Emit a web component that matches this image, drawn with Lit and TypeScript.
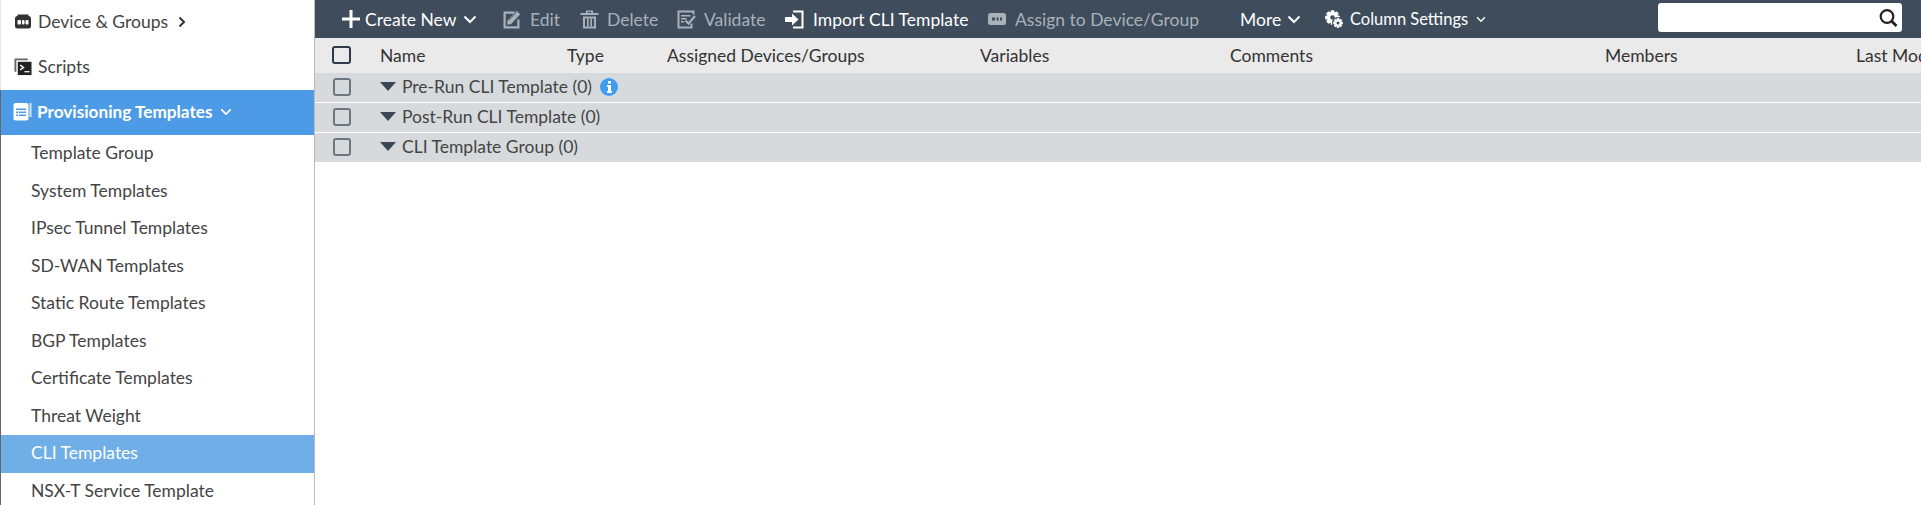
import { LitElement, html, css, svg } from "lit";
import { customElement } from "lit/decorators.js";

const chev = (c: string, w = 14, h = 9, sw = 2) => html`<svg class="chev" width=${w} height=${h} viewBox="0 0 14 9"><path d="M1.500 1.500 7 7l5.500-5.500" fill="none" stroke=${c} stroke-width=${sw}/></svg>`;

/* Gear outline computed from tooth count and radii */
const cog = (cx: number, cy: number, R: number, r: number, n: number) => {
  const pts: string[] = [];
  for (let i = 0; i < n; i++) {
    const a = (i / n) * Math.PI * 2;
    const s = (Math.PI * 2) / n;
    for (const [rad, off] of [[r, -0.5], [R, -0.28], [R, 0.28], [r, 0.5]] as [number, number][]) {
      const t = a + off * s;
      pts.push(`${(cx + rad * Math.cos(t)).toFixed(2)},${(cy + rad * Math.sin(t)).toFixed(2)}`);
    }
  }
  return pts.join(" ");
};

const OFF = "#a9b1b9";
const BAR = "#3e4c5c";

const side = {
  device: svg`<path d="M3.500 1.500h11v1.500h-11z" fill="#333"/><rect x="1" y="3" width="16" height="12.500" rx="2.500" fill="#333"/><rect x="3.500" y="7" width="3.500" height="4.500" rx="1" fill="#fff"/><rect x="8" y="7" width="2.500" height="4.500" rx="1" fill="#fff"/><rect x="11.500" y="7" width="3" height="4.500" rx="1" fill="#fff"/>`,
  scripts: svg`<path d="M0.500 0.500h14v2H2.500v12h-2z" fill="#666"/><rect x="4" y="4" width="14.500" height="14" fill="#222"/><path d="M6.500 7.500l3.500 2.500-3.500 2.500" fill="none" stroke="#fff" stroke-width="1.500"/><path d="M11 14.500h5.500" stroke="#fff" stroke-width="1.300"/>`,
  prov: svg`<path d="M16.500 1h2v14h-2z" fill="#fff" opacity=".75"/><rect x="0.500" y="1" width="15" height="17.500" rx="2" fill="#fff"/><path d="M3 6.500h10V8H3zM6 9.500h7V11H6zM6 12.500h7V14H6zM3 9.500h2V11H3zM3 12.500h2V14H3z" fill="#4d9be6"/>`,
};

const tb = {
  plus: svg`<path d="M7.500 0h3v7.500H18v3h-7.500V18h-3v-7.500H0v-3h7.500z" fill="#fff"/>`,
  edit: svg`<path d="M1.500 1.500h11v2.200H3.700v12.600h11.600V9.500h2.200v9h-16z" fill="${OFF}"/><path d="M5.500 10.500 14.500.8l3.700 3.500-9 9.700-4 .8z" fill="${OFF}"/><path d="M6.800 10.300l8-8.500" stroke="${BAR}" stroke-width=".8"/>`,
  del: svg`<path d="M6 .5h7v2.500h5.500v2H.5V3H6zm1.800 1.300v1.200h3.400V1.800z" fill="${OFF}" fill-rule="evenodd"/><path d="M3 6.500h13v12H3zm2 2v8h9v-8z" fill="${OFF}" fill-rule="evenodd"/><path d="M7 8.500h1.700v8H7zM10.300 8.500H12v8h-1.700z" fill="${OFF}"/>`,
  val: svg`<path d="M.5.500h17v4h-2V2.500H2.500v14h11v-3h2v5H.5z" fill="${OFF}"/><path d="M4 5h9.500v1.500H4zM4 8h5.500v1.500H4zM4 11h3v1.500H4z" fill="${OFF}"/><path d="M8.500 10.500l3 3.200 6.500-7.700" fill="none" stroke="${OFF}" stroke-width="2.200"/>`,
  imp: svg`<path d="M8 .5h10.500v18H8v-2h8.500V2.500H8z" fill="#fff"/><path d="M0 7h7V3.500l6.500 6-6.500 6V12H0z" fill="#fff"/>`,
  assign: svg`<rect x="0" y="3" width="18" height="12" rx="2.500" fill="${OFF}"/><rect x="4" y="7.500" width="3" height="3" fill="${BAR}"/><rect x="8.500" y="7.500" width="2" height="3" fill="${BAR}"/><rect x="12" y="7.500" width="2" height="3" fill="${BAR}"/>`,
  gear: svg`<polygon points="${cog(7.500, 7.500, 7.500, 5.500, 8)}" fill="#fff"/><circle cx="7.500" cy="7.500" r="2.200" fill="${BAR}"/><circle cx="13" cy="13" r="6" fill="${BAR}"/><polygon points="${cog(13, 13, 5, 3.600, 8)}" fill="#fff"/><circle cx="13" cy="13" r="1.500" fill="${BAR}"/>`,
};

interface Btn { w: number; icon: unknown; iw: number; gap: number; label: string; off?: boolean; small?: boolean; chev?: unknown; cgap?: number; }

const buttons: Btn[] = [
  { w: 160, icon: tb.plus, iw: 18, gap: 5, label: "Create New", chev: chev("#fff"), cgap: 7 },
  { w: 78, icon: tb.edit, iw: 19, gap: 9, label: "Edit", off: true },
  { w: 97, icon: tb.del, iw: 19, gap: 8, label: "Delete", off: true },
  { w: 108, icon: tb.val, iw: 19, gap: 8, label: "Validate", off: true },
  { w: 203, icon: tb.imp, iw: 19, gap: 9, label: "Import CLI Template" },
  { w: 252, icon: tb.assign, iw: 18, gap: 9, label: "Assign to Device/Group", off: true },
  { w: 85, icon: null, iw: 0, gap: 0, label: "More", chev: chev("#fff"), cgap: 6 },
  { w: 200, icon: tb.gear, iw: 19, gap: 6, label: "Column Settings", small: true, chev: chev("#fff", 10, 7, 2), cgap: 8 },
];

@customElement("app-root")
export class AppRoot extends LitElement {
  static styles = css`
    :host { display: block; width: 1921px; height: 505px; overflow: hidden; background: #fff; font-family: Lato, "Liberation Sans", sans-serif; font-size: 17.500px; color: #444; }
    .page { display: flex; height: 505px; }
    .side { width: 315px; flex: none; box-sizing: border-box; border-right: 1px solid #bbb; overflow: hidden; }
    .top { height: 45px; display: flex; align-items: center; gap: 6px; padding-left: 13px; box-sizing: border-box; border-left: 1px solid #e8e8e8; padding-bottom: 2px; }
    .top svg.ic { flex: none; }
    .top .chev { margin-left: 4px; }
    .prov { background: #4d9be6; color: #fff; font-weight: 700; font-size: 17.200px; border-left: 1px solid #666; padding-left: 12px; gap: 5px; }
    .prov .chev { margin-left: 3px; }
    .subs { border-left: 1px solid #666; }
    .sub { height: 37.500px; line-height: 35px; padding-left: 30px; white-space: nowrap; }
    .sub.on { background: #70aee8; color: #fff; }
    .main { flex: 1; min-width: 0; overflow: hidden; }
    .toolbar { height: 38px; background: #3e4c5c; display: flex; align-items: center; color: #fff; padding-left: 27px; position: relative; }
    .btn { display: flex; align-items: center; flex: none; white-space: nowrap; }
    .btn.off { color: #a9b1b9; }
    .btn.small { font-size: 16.500px; }
    .btn svg { flex: none; }
    .search { position: absolute; left: 1343px; top: 3px; width: 244px; height: 29px; background: #fff; border-radius: 3px; box-sizing: border-box; display: flex; justify-content: flex-end; align-items: center; padding-right: 3px; }
    .head { height: 35px; background: #eaeaea; display: flex; align-items: center; color: #333; white-space: nowrap; overflow: hidden; padding-bottom: 1px; box-sizing: border-box; }
    .cbw { width: 65px; flex: none; padding-left: 18px; box-sizing: border-box; display: flex; }
    .head .cbw { padding-left: 17px; }
    .cb { width: 18px; height: 18px; box-sizing: border-box; border: 2px solid #6e7780; border-radius: 3px; }
    .head .cb { width: 19px; border-color: #2d3a4a; }
    .col { flex: none; }
    .row { height: 29px; margin-bottom: 1px; background: #d6dadd; display: flex; align-items: center; color: #444; padding-bottom: 1px; box-sizing: border-box; }
    .row span { padding-bottom: 1px; }
    .tri { width: 0; height: 0; border-left: 8px solid transparent; border-right: 8px solid transparent; border-top: 9px solid #3a4654; margin-right: 6px; margin-bottom: 2px; }
    .info { width: 18px; height: 18px; border-radius: 50%; background: #3f9cf0; margin-left: 8px; display: flex; align-items: center; justify-content: center; }
  `;

  render() {
    const subs = ["Template Group", "System Templates", "IPsec Tunnel Templates", "SD-WAN Templates", "Static Route Templates", "BGP Templates", "Certificate Templates", "Threat Weight", "CLI Templates", "NSX-T Service Template"];
    const cols: [string, number][] = [["Name", 187], ["Type", 100], ["Assigned Devices/Groups", 313], ["Variables", 250], ["Comments", 375], ["Members", 251], ["Last Modified", 200]];
    const rows = ["Pre-Run CLI Template (0)", "Post-Run CLI Template (0)", "CLI Template Group (0)"];
    return html`<div class="page">
      <nav class="side">
        <div class="top"><svg class="ic" width="18" height="18" viewBox="0 0 18 18">${side.device}</svg><span>Device &amp; Groups</span><svg class="chev" width="8" height="12" viewBox="0 0 8 12"><path d="M1.500 1.500 6 6l-4.500 4.500" fill="none" stroke="#333" stroke-width="2"/></svg></div>
        <div class="top"><svg class="ic" width="18" height="18" viewBox="0 0 19 19">${side.scripts}</svg><span>Scripts</span></div>
        <div class="top prov"><svg class="ic" width="19" height="19" viewBox="0 0 19 19">${side.prov}</svg><span>Provisioning Templates</span>${chev("#fff", 12, 8)}</div>
        <div class="subs">${subs.map((s) => html`<div class="sub ${s === "CLI Templates" ? "on" : ""}">${s}</div>`)}</div>
      </nav>
      <main class="main">
        <div class="toolbar">
          ${buttons.map((b) => html`<div class="btn ${b.off ? "off" : ""} ${b.small ? "small" : ""}" style="width:${b.w}px">
            ${b.icon ? html`<svg style="margin-right:${b.gap}px" width=${b.iw} height=${b.iw} viewBox="0 0 ${b.iw} ${b.iw}">${b.icon}</svg>` : ""}
            <span>${b.label}</span>
            ${b.chev ? html`<span style="margin-left:${b.cgap}px;display:flex">${b.chev}</span>` : ""}
          </div>`)}
          <div class="search"><svg width="20" height="20" viewBox="0 0 20 20"><circle cx="8" cy="8.500" r="6.300" fill="none" stroke="#222" stroke-width="2.200"/><path d="M12.500 13 17.500 18" stroke="#222" stroke-width="2.800"/></svg></div>
        </div>
        <div class="head"><div class="cbw"><div class="cb"></div></div>${cols.map(([c, w]) => html`<div class="col" style="width:${w}px">${c}</div>`)}</div>
        ${rows.map((r, i) => html`<div class="row"><div class="cbw"><div class="cb"></div></div><div class="tri"></div><span>${r}</span>${i === 0 ? html`<div class="info"><svg width="5" height="12" viewBox="0 0 5 12"><path d="M1 0h3v2.500H1zM0 4h4v6h1v2H0v-2h1V6H0z" fill="#fff"/></svg></div>` : ""}</div>`)}
      </main>
    </div>`;
  }
}
